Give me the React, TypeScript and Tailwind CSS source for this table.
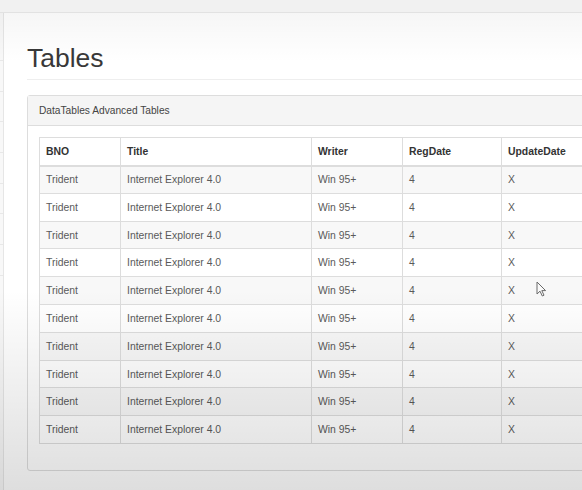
import React from "react";

const rows = Array.from({ length: 10 }, () => ({
  bno: "Trident",
  title: "Internet Explorer 4.0",
  writer: "Win 95+",
  reg: "4",
  upd: "X",
}));

export default function App() {
  return (
    <div
      className="relative w-[582px] h-[490px] overflow-hidden bg-white"
      style={{ fontFamily: '"Liberation Sans", Arial, sans-serif' }}
    >
      <div className="h-[13px] bg-[#f1f1f1] border-b border-[#e2e2e2]" />
      <div className="flex h-[477px]">
        <div className="w-[4px] shrink-0 border-r border-[#e6e6e6] bg-[#f8f8f8]">
          <div className="h-[48px] border-b border-[#e8e8e8]" />
          {Array.from({ length: 7 }).map((_, i) => (
            <div key={i} className="h-[30.7px] border-b border-[#e8e8e8]" />
          ))}
        </div>
        <div className="flex-1 overflow-hidden pl-[23px]">
          <div className="mt-[31px] w-[700px] border-b border-[#eeeeee] pb-[7px]">
            <h1 className="text-[26.5px] leading-[28px] text-[#383838] font-normal">Tables</h1>
          </div>
          <div className="mt-[15px] w-[700px] rounded-[3px] border border-[#dddddd] bg-white">
            <div className="flex h-[30px] items-center border-b border-[#dddddd] bg-[#f5f5f5] px-[11px] text-[10.2px] text-[#444444]">
              DataTables Advanced Tables
            </div>
            <div className="p-[11px] pb-[26px]">
              <table className="border-collapse text-[10.4px]" style={{ tableLayout: "fixed" }}>
                <colgroup>
                  <col className="w-[81px]" />
                  <col className="w-[191px]" />
                  <col className="w-[91px]" />
                  <col className="w-[99px]" />
                  <col className="w-[120px]" />
                </colgroup>
                <thead>
                  <tr className="h-[28px]">
                    {["BNO", "Title", "Writer", "RegDate", "UpdateDate"].map((h) => (
                      <th
                        key={h}
                        className="border border-b-2 border-[#dddddd] px-[6px] pt-[2px] text-left font-bold text-[#333333]"
                      >
                        {h}
                      </th>
                    ))}
                  </tr>
                </thead>
                <tbody>
                  {rows.map((r, i) => (
                    <tr key={i} className={`h-[27.8px] ${i % 2 === 0 ? "bg-[#f8f8f8]" : "bg-white"}`}>
                      <td className="border border-[#dddddd] px-[6px] pt-[1px] text-[#5a5a5a]">{r.bno}</td>
                      <td className="border border-[#dddddd] px-[6px] pt-[1px] text-[#5a5a5a]">{r.title}</td>
                      <td className="border border-[#dddddd] px-[6px] pt-[1px] text-[#5a5a5a]">{r.writer}</td>
                      <td className="border border-[#dddddd] px-[6px] pt-[1px] text-[#5a5a5a]">{r.reg}</td>
                      <td className="border border-[#dddddd] px-[6px] pt-[1px] text-[#5a5a5a]">{r.upd}</td>
                    </tr>
                  ))}
                </tbody>
              </table>
            </div>
          </div>
        </div>
      </div>

      {/* video vignette overlays */}
      <div className="pointer-events-none absolute left-0 right-0 top-[13px] h-[50px] bg-gradient-to-b from-[rgba(0,0,0,0.035)] to-transparent" />
      <div className="pointer-events-none absolute left-0 right-0 bottom-0 h-[200px] bg-gradient-to-b from-transparent to-[rgba(0,0,0,0.13)]" />

      {/* mouse cursor */}
      <svg
        className="pointer-events-none absolute left-[536px] top-[281px]"
        width="12"
        height="17"
        viewBox="0 0 12 17"
      >
        <path
          d="M1 1 L1 13 L4 10.2 L6.3 15 L8 14.2 L5.8 9.6 L9.6 9.6 Z"
          fill="#fafafa"
          stroke="#6a6a6a"
          strokeWidth="1"
          strokeLinejoin="round"
        />
      </svg>
    </div>
  );
}
